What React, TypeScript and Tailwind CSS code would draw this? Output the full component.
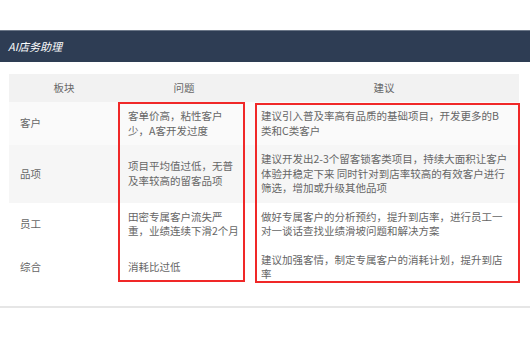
const rows = [
  {
    block: '客户',
    problem: '客单价高，粘性客户少，A客开发过度',
    advice: '建议引入普及率高有品质的基础项目，开发更多的B类和C类客户',
    bg: 'bg-[#fafafa]'
  },
  {
    block: '品项',
    problem: '项目平均值过低，无普及率较高的留客品项',
    advice: '建议开发出2-3个留客锁客类项目，持续大面积让客户体验并稳定下来 同时针对到店率较高的有效客户进行筛选，增加或升级其他品项',
    bg: 'bg-[#f6f6f6]'
  },
  {
    block: '员工',
    problem: '田密专属客户流失严重，业绩连续下滑2个月',
    advice: '做好专属客户的分析预约，提升到店率，进行员工一对一谈话查找业绩滑坡问题和解决方案',
    bg: 'bg-white'
  },
  {
    block: '综合',
    problem: '消耗比过低',
    advice: '建议加强客情，制定专属客户的消耗计划，提升到店率',
    bg: 'bg-white'
  }
];

export default function App() {
  return (
    <div className="h-[360px] w-[530px] bg-white pt-[30px] font-['Noto_Sans_CJK_SC',sans-serif] text-[10.5px] text-[#666]">
      <div className="flex h-[32px] items-center border-t border-[#6b7788] bg-[#2e3d54] pl-[8px]">
        <h1 className="text-[11px] italic text-white">AI店务助理</h1>
      </div>

      <div className="relative mt-[12px] ml-[9px] w-[510px]">
        <div className="grid h-[28px] grid-cols-[110px_130px_270px] items-center bg-[#f2f2f2] text-center">
          <span>板块</span>
          <span>问题</span>
          <span>建议</span>
        </div>
        {rows.map((row) => (
          <div key={row.block} className={`grid grid-cols-[110px_130px_270px] items-center py-[7px] leading-[14.5px] ${row.bg}`}>
            <div className="pl-[11px]">{row.block}</div>
            <div className="pl-[9px] pr-[10px]">{row.problem}</div>
            <div className="pl-[12px] pr-[11px]">{row.advice}</div>
          </div>
        ))}

        {/* annotation boxes */}
        <div className="absolute left-[109px] top-[28px] h-[180px] w-[127px] border-2 border-[#f02828]" />
        <div className="absolute left-[246px] top-[29px] h-[180px] w-[265px] border-2 border-[#f02828]" />
      </div>

      <div className="mt-[17px] h-[2px] bg-[#e6e6e6]" />
    </div>
  );
}
